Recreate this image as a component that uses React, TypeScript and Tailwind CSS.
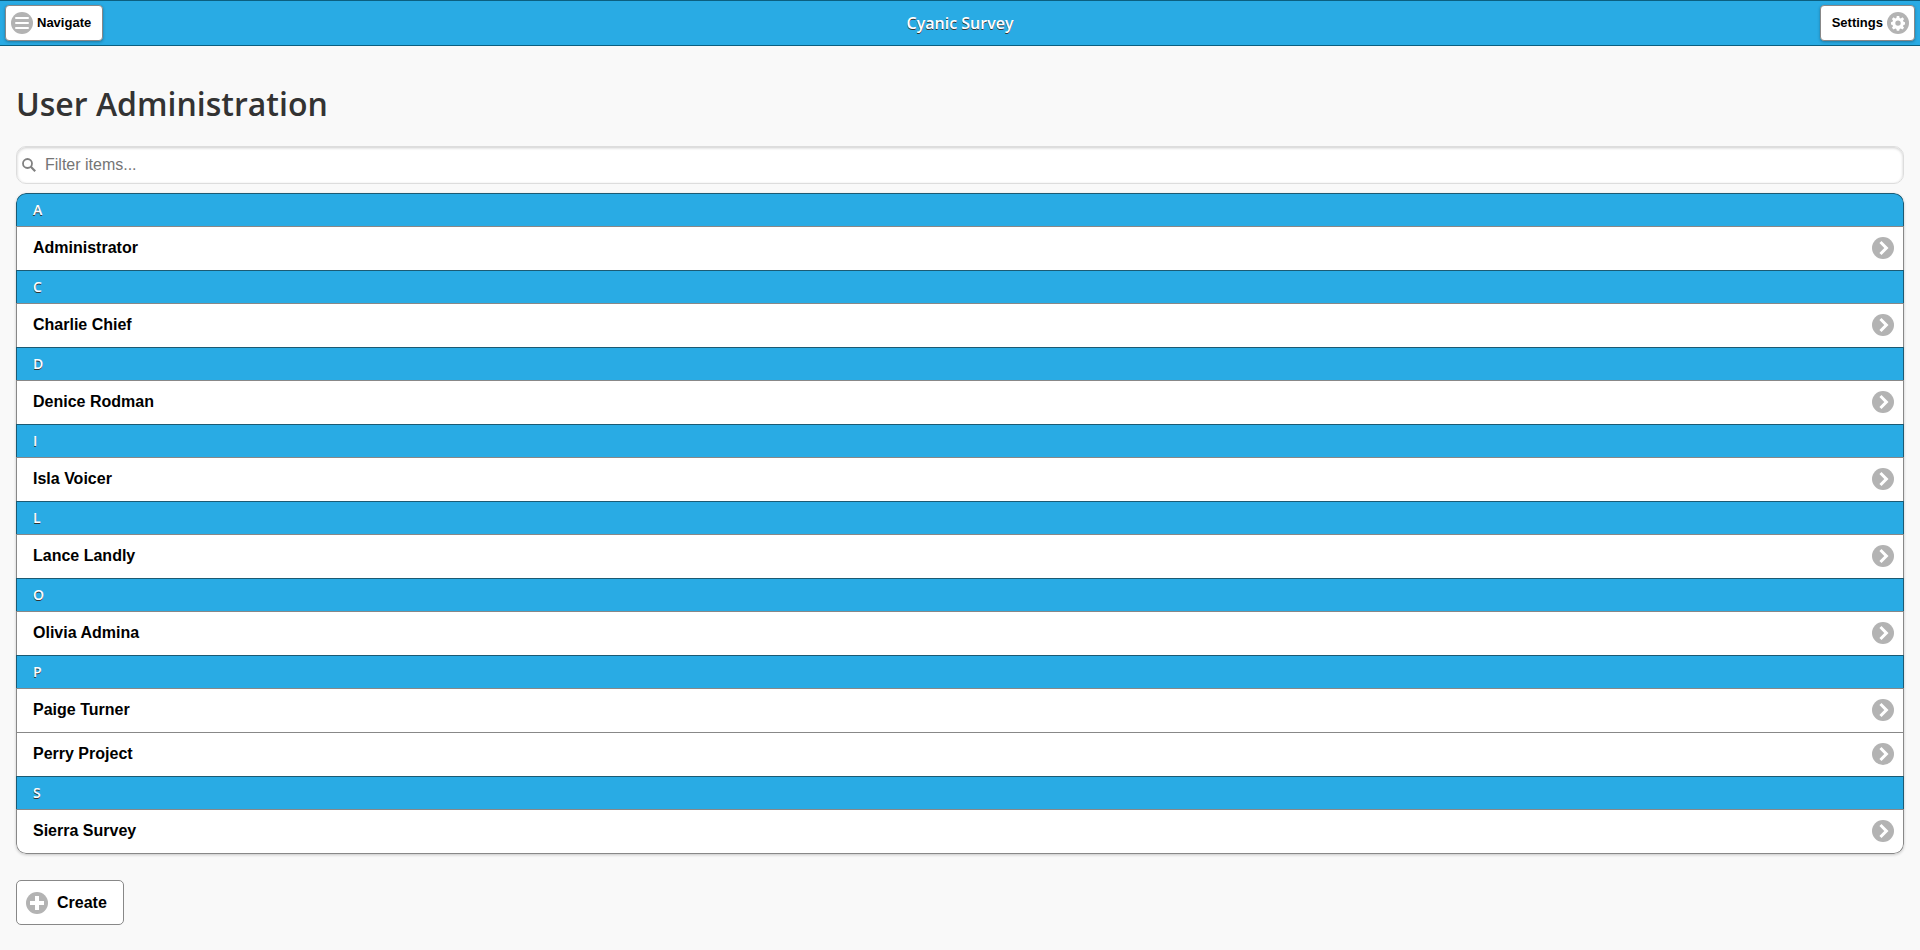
import { useState } from "react";

interface Group {
  letter: string;
  users: string[];
}

const groups: Group[] = [
  { letter: "A", users: ["Administrator"] },
  { letter: "C", users: ["Charlie Chief"] },
  { letter: "D", users: ["Denice Rodman"] },
  { letter: "I", users: ["Isla Voicer"] },
  { letter: "L", users: ["Lance Landly"] },
  { letter: "O", users: ["Olivia Admina"] },
  { letter: "P", users: ["Paige Turner", "Perry Project"] },
  { letter: "S", users: ["Sierra Survey"] },
];

type IconName = "bars" | "gear" | "plus" | "arrow";

// 14px glyphs, drawn white on a grey disc
const glyphs: Record<IconName, string> = {
  bars: "M1 1h12a1 1 0 0 1 0 2H1a1 1 0 0 1 0-2zM1 6h12a1 1 0 0 1 0 2H1a1 1 0 0 1 0-2zM1 11h12a1 1 0 0 1 0 2H1a1 1 0 0 1 0-2z",
  gear: "M5.8 0h2.4l.4 1.9 1.2.5 1.6-1.1 1.7 1.7-1.1 1.600.5 1.200 1.500.4v2.400l-1.500.4-.5 1.200 1.100 1.600-1.700 1.700-1.600-1.100-1.200.5-.4 1.900H5.800l-.4-1.900-1.200-.5-1.600 1.100L.9 11.800 2 10.200l-.5-1.200L0 8.600V6.200l1.500-.4.5-1.200L.9 3l1.700-1.700 1.600 1.100 1.200-.5zM7 4.400a2.700 2.700 0 1 0 0 5.400 2.700 2.700 0 0 0 0-5.400z",
  plus: "M14 5H9V0H5v5H0v4h5v5h4V9h5z",
  arrow: "M3.4 2.1L8.3 7 3.4 11.9 5.5 14 12.5 7 5.5 0z",
};

function DiscIcon({ name }: { name: IconName }) {
  return (
    <svg className="block size-[22px] shrink-0" viewBox="0 0 22 22" aria-hidden="true">
      <circle cx="11" cy="11" r="11" fill="#b3b3b3" />
      <path d={glyphs[name]} transform="translate(4 4)" fill="#fff" fillRule="evenodd" />
    </svg>
  );
}

export default function App() {
  const [filter, setFilter] = useState("");

  const visible = groups
    .map((group) => ({
      ...group,
      users: group.users.filter((user) => user.toLowerCase().includes(filter.toLowerCase())),
    }))
    .filter((group) => group.users.length > 0);

  return (
    <div className="min-h-screen bg-[#f9f9f9] font-['Liberation_Sans',Arial,sans-serif] text-[#333]">
      <header className="flex items-center justify-between border-y border-[#0b5f80] bg-[#29abe4] px-[5px] py-1">
        <div className="flex flex-1">
          <button className="flex h-[36px] items-center gap-1 rounded-[4px] border border-[#888] bg-white pl-[5px] pr-[11px] text-[13px] leading-[16px] font-bold text-black shadow-[0_1px_3px_rgba(0,0,0,0.3)]">
            <DiscIcon name="bars" />
            Navigate
          </button>
        </div>
        <h1 className="font-['Open_Sans',sans-serif] text-base leading-[20px] font-semibold text-white [text-shadow:0_1px_0_#333]">
          Cyanic Survey
        </h1>
        <div className="flex flex-1 justify-end">
          <button className="flex h-[36px] items-center gap-1 rounded-[4px] border border-[#888] bg-white pl-[11px] pr-[5px] text-[13px] leading-[16px] font-bold text-black shadow-[0_1px_3px_rgba(0,0,0,0.3)]">
            Settings
            <DiscIcon name="gear" />
          </button>
        </div>
      </header>

      <main className="px-4 pt-[37px] pb-6">
        <h2 className="font-['Open_Sans',sans-serif] text-[32px] leading-[42px] font-semibold">User Administration</h2>

        <label className="mt-[21px] flex h-[38px] items-center rounded-[10px] border border-[#ddd] bg-white pl-[5px] shadow-[inset_0_1px_3px_rgba(0,0,0,0.2)]">
          <svg className="size-[14px] shrink-0" viewBox="0 0 14 14" fill="none" stroke="#808080" aria-hidden="true">
            <circle cx="5.5" cy="5.5" r="4.5" strokeWidth="1.8" />
            <path d="M8.8 8.8l4.4 4.4" strokeWidth="2.2" />
          </svg>
          <input
            type="text"
            aria-label="Filter items"
            placeholder="Filter items..."
            value={filter}
            onChange={(e) => setFilter(e.target.value)}
            className="flex-1 self-stretch bg-transparent px-[9px] text-base leading-[20px] text-[#333] outline-none placeholder:text-[#757575]"
          />
        </label>

        <ul className="mt-[9px] overflow-hidden rounded-[10px] shadow-[0_1px_3px_rgba(0,0,0,0.2)]">
          {visible.map((group) => (
            <li key={group.letter} className="group">
              <h3 className="border-x border-t border-[#1c5a73] bg-[#29abe4] px-4 py-[7px] font-['Open_Sans',sans-serif] text-sm leading-[18px] font-semibold text-white [text-shadow:0_1px_0_#333] group-first:rounded-t-[10px]">
                {group.letter}
              </h3>
              <ul className="border-x border-[#888] bg-white group-last:rounded-b-[10px] group-last:border-b">
                {group.users.map((user) => (
                  <li key={user} className="border-t border-[#888]">
                    <a
                      href="#"
                      className="flex items-center justify-between pt-[9px] pr-[9px] pb-[11px] pl-4 text-base leading-[23px] font-bold text-black"
                    >
                      {user}
                      <DiscIcon name="arrow" />
                    </a>
                  </li>
                ))}
              </ul>
            </li>
          ))}
        </ul>

        <button className="mt-[26px] flex h-[45px] items-center gap-[9px] rounded-[5px] border border-[#888] bg-white pr-4 pl-[9px] text-base leading-[20px] font-bold text-black">
          <DiscIcon name="plus" />
          Create
        </button>
      </main>
    </div>
  );
}
